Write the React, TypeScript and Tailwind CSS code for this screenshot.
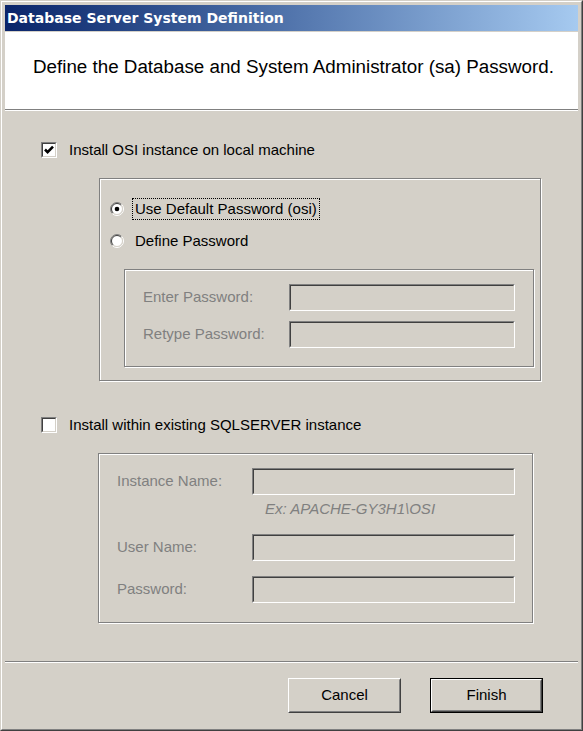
const body = { fontFamily: '"Liberation Sans", Arial, sans-serif' }

function Checkbox({ checked }: { checked?: boolean }) {
	return (
		<div className="w-[16px] h-[16px] border border-t-[#808080] border-l-[#808080] border-b-white border-r-white shrink-0">
			<div className="w-full h-full border border-t-[#404040] border-l-[#404040] border-b-[#d4d0c8] border-r-[#d4d0c8] bg-white flex items-center justify-center">
				{checked && (
					<svg width="12" height="12" viewBox="0 0 12 12">
						<path d="M2 5.5 L4.6 8.1 L10 2.7" fill="none" stroke="#000" strokeWidth="2.6" />
					</svg>
				)}
			</div>
		</div>
	)
}

function Radio({ checked }: { checked?: boolean }) {
	return (
		<svg width="14" height="14" viewBox="0 0 14 14" className="shrink-0">
			<circle cx="7" cy="7" r="5.5" fill="#fff" />
			<path d="M2.4 11.6 A6.5 6.5 0 0 1 11.6 2.4" fill="none" stroke="#808080" />
			<path d="M11.6 2.4 A6.5 6.5 0 0 1 2.4 11.6" fill="none" stroke="#fff" />
			<path d="M3.1 10.9 A5.5 5.5 0 0 1 10.9 3.1" fill="none" stroke="#404040" />
			<path d="M10.9 3.1 A5.5 5.5 0 0 1 3.1 10.9" fill="none" stroke="#d4d0c8" />
			{checked && <circle cx="7" cy="7" r="2.3" fill="#000" />}
		</svg>
	)
}

function Field({ className }: { className: string }) {
	return (
		<div className={`h-[27px] border border-t-[#808080] border-l-[#808080] border-b-white border-r-white ${className}`}>
			<div className="w-full h-full border border-t-[#404040] border-l-[#404040] border-b-[#d4d0c8] border-r-[#d4d0c8] bg-[#d4d0c8]" />
		</div>
	)
}

function Button({ label, primary }: { label: string; primary?: boolean }) {
	const face = (
		<div className="w-full h-full border border-t-white border-l-white border-b-[#404040] border-r-[#404040]">
			<div className="w-full h-full border border-t-[#d4d0c8] border-l-[#d4d0c8] border-b-[#808080] border-r-[#808080] flex items-center justify-center text-[15px] text-black">
				{label}
			</div>
		</div>
	)
	return <div className={`w-[113px] h-[35px] ${primary ? 'border border-black' : ''}`}>{face}</div>
}

export default function App() {
	return (
		<div className="w-[583px] h-[731px] bg-[#d4d0c8] border border-t-[#d4d0c8] border-l-[#d4d0c8] border-b-[#404040] border-r-[#404040]" style={body}>
			<div className="w-full h-full border border-t-white border-l-white border-b-[#808080] border-r-[#808080] p-[3px] flex flex-col">
				<div className="h-[26px] flex items-center pl-[2px] bg-gradient-to-r from-[#0a246a] to-[#a6caf0]">
					<span className="text-white font-bold text-[14px]" style={{ fontFamily: '"DejaVu Sans", Verdana, sans-serif' }}>
						Database Server System Definition
					</span>
				</div>

				<div className="mt-[1px] h-[78px] bg-white border-b border-b-[#808080] shadow-[0_1px_0_#fff] pt-[24px] pl-[28px]">
					<div className="text-[18.8px] leading-[22px] text-black">Define the Database and System Administrator (sa) Password.</div>
				</div>

				<div className="flex flex-col text-[15px] text-black">
					<div className="mt-[31px] ml-[36px] h-[18px] flex items-center gap-[12px]">
						<Checkbox checked />
						<span>Install OSI instance on local machine</span>
					</div>

					<div className="mt-[19px] ml-[94px] w-[442px] h-[203px] border border-[#808080] shadow-[inset_1px_1px_0_#fff,1px_1px_0_#fff] flex flex-col">
						<div className="mt-[19px] ml-[10px] h-[22px] flex items-center gap-[8px]">
							<Radio checked />
							<span className="border border-dotted border-black px-[2px] leading-[20px]">Use Default Password (osi)</span>
						</div>
						<div className="mt-[10px] ml-[10px] h-[22px] flex items-center gap-[8px]">
							<Radio />
							<span className="border border-transparent px-[2px] leading-[20px]">Define Password</span>
						</div>
						<div className="mt-[17px] ml-[24px] w-[410px] h-[98px] border border-[#808080] shadow-[inset_1px_1px_0_#fff,1px_1px_0_#fff] flex flex-col text-[#808080]">
							<div className="mt-[14px] flex items-center">
								<span className="ml-[18px] w-[146px]">Enter Password:</span>
								<Field className="w-[226px]" />
							</div>
							<div className="mt-[10px] flex items-center">
								<span className="ml-[18px] w-[146px]">Retype Password:</span>
								<Field className="w-[226px]" />
							</div>
						</div>
					</div>

					<div className="mt-[35px] ml-[36px] h-[18px] flex items-center gap-[12px]">
						<Checkbox />
						<span>Install within existing SQLSERVER instance</span>
					</div>

					<div className="mt-[19px] ml-[93px] w-[435px] h-[170px] border border-[#808080] shadow-[inset_1px_1px_0_#fff,1px_1px_0_#fff] flex flex-col text-[#808080]">
						<div className="mt-[14px] flex items-center">
							<span className="ml-[18px] w-[135px]">Instance Name:</span>
							<Field className="w-[263px]" />
						</div>
						<div className="mt-[5px] ml-[166px] h-[18px] leading-[18px] italic">{'Ex: APACHE-GY3H1\\OSI'}</div>
						<div className="mt-[16px] flex items-center">
							<span className="ml-[18px] w-[135px]">User Name:</span>
							<Field className="w-[263px]" />
						</div>
						<div className="mt-[15px] flex items-center">
							<span className="ml-[18px] w-[135px]">Password:</span>
							<Field className="w-[263px]" />
						</div>
					</div>

					<div className="mt-[38px] h-[2px] border-t border-t-[#808080] border-b border-b-white" />

					<div className="mt-[15px] flex justify-end gap-[29px] pr-[35px]">
						<Button label="Cancel" />
						<Button label="Finish" primary />
					</div>
				</div>
			</div>
		</div>
	)
}
